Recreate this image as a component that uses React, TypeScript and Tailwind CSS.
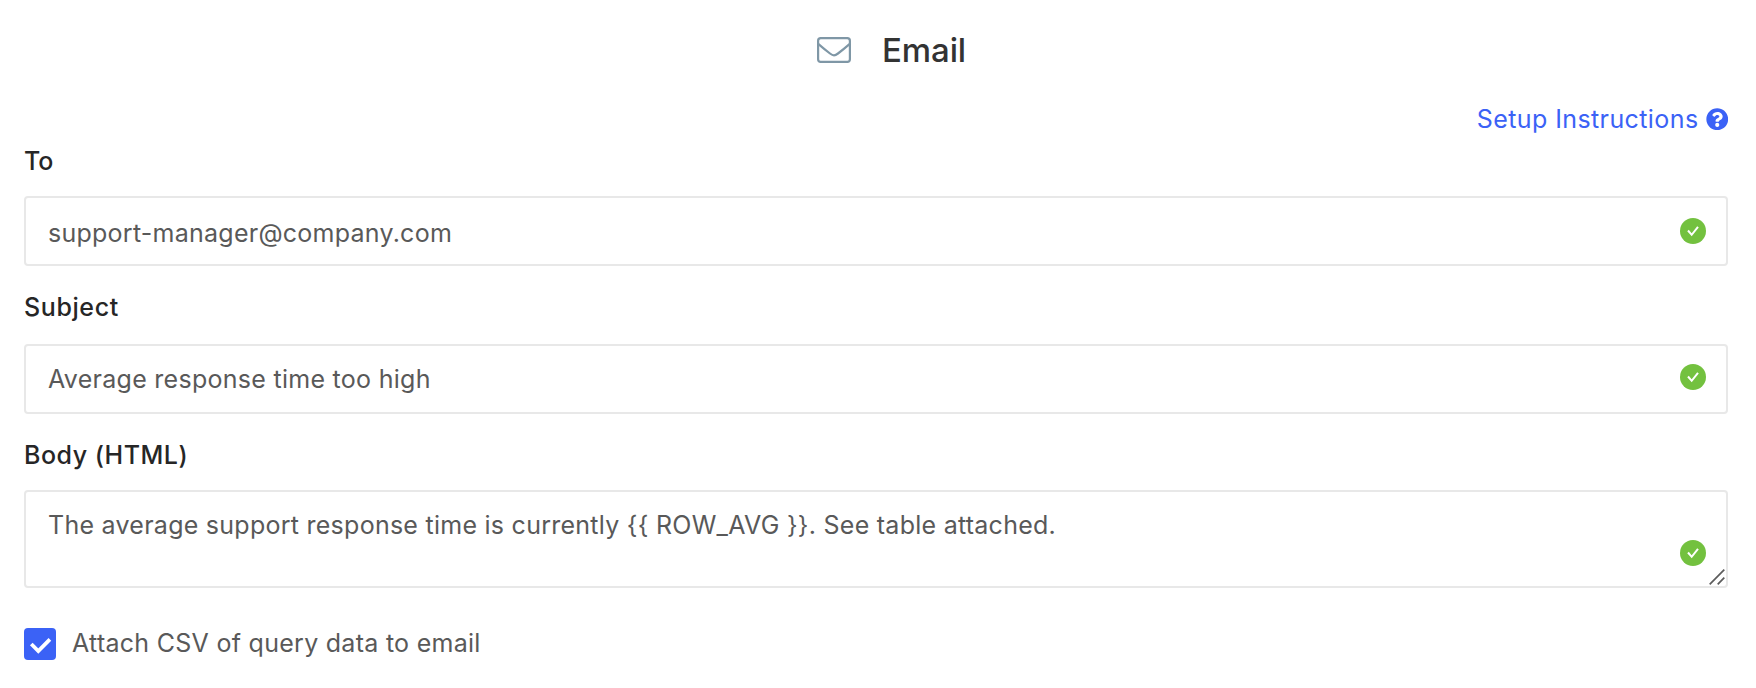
import { ReactNode } from 'react';
import { FaQuestionCircle } from 'react-icons/fa';

function EnvelopeIcon() {
  return (
    <svg className="-mt-px h-[26px] w-[34px]" viewBox="0 0 34 26" fill="none" stroke="#7f97a6" strokeWidth="2.2">
      <rect x="1.1" y="1.1" width="31.8" height="23.8" rx="2.6" />
      <path d="M1.2 6.9C5 10.2 10 14.2 13 16.5C14.6 17.7 15.6 18.3 17 18.3C18.4 18.3 19.4 17.7 21 16.5C24 14.2 29 10.2 32.8 6.9" />
    </svg>
  );
}

function ValidIcon() {
  return (
    <svg className="h-[26px] w-[26px] shrink-0" viewBox="0 0 26 26" fill="none">
      <circle cx="13" cy="13" r="13" fill="#73c13f" />
      <path d="M8 12.5L11.7 16.8L18 8.9" stroke="#fff" strokeWidth="2" />
    </svg>
  );
}

function Label({ children }: { children: ReactNode }) {
  return <div className="h-8 text-[25px] leading-8 font-medium text-[#262626]">{children}</div>;
}

export default function App() {
  return (
    <div className="flex h-[688px] flex-col bg-white pr-7 pl-6 font-['Inter',sans-serif] text-[25px] leading-8 tracking-[0.28px] text-[#595959]">
      <header className="mt-[30px] flex h-10 w-full shrink-0 items-center pl-[793px]">
        <EnvelopeIcon />
        <h1 className="ml-[31px] text-[33px] leading-10 font-medium tracking-[-0.1px] text-[#333333]">Email</h1>
      </header>

      <a className="mt-[33px] flex h-8 shrink-0 items-center justify-end tracking-[0.4px] text-[#3b62f6]">
        <span>Setup Instructions</span>
        <FaQuestionCircle className="ml-[7px] h-[22.5px] w-[22.5px]" />
      </a>

      <div className="mt-[10px]">
        <Label><span className="tracking-[-0.2px]">To</span></Label>
        <div className="mt-[19px] flex h-[70px] items-start justify-between rounded-[4px] border-2 border-[#e8e8e8] pt-[19px] pr-5 pl-[22px]">
          <span className="tracking-[0.25px]">support-manager@company.com</span>
          <span className="mt-px"><ValidIcon /></span>
        </div>
      </div>

      <div className="mt-[25px]">
        <Label><span className="tracking-[0.6px]">Subject</span></Label>
        <div className="mt-[21px] flex h-[70px] items-start justify-between rounded-[4px] border-2 border-[#e8e8e8] pt-[17px] pr-5 pl-[22px]">
          <span>Average response time too high</span>
          <span className="mt-px"><ValidIcon /></span>
        </div>
      </div>

      <div className="mt-[25px]">
        <Label><span className="tracking-[0.5px]">Body (HTML)</span></Label>
        <div className="relative mt-[19px] flex h-[98px] items-start justify-between rounded-[4px] border-2 border-[#e8e8e8] pt-[17px] pr-5 pl-[22px]">
          <span className="tracking-[0.26px]">{'The average support response time is currently {{ ROW_AVG }}. See table attached.'}</span>
          <span className="mt-[31px]"><ValidIcon /></span>
          <svg className="absolute right-[1px] bottom-[1px] h-4 w-4" viewBox="0 0 16 16" stroke="#5c5c5c" strokeWidth="1.7">
            <path d="M0.7 15.3L15.3 0.7M8.7 15.3L15.3 8.7" />
          </svg>
        </div>
      </div>

      <label className="mt-[39px] flex h-8 items-start">
        <span className="mt-px flex h-8 w-8 items-center justify-center rounded-[4px] bg-[#3b62f6]">
          <svg className="h-8 w-8" viewBox="0 0 32 32" fill="none" stroke="#fff" strokeWidth="3.8">
            <path d="M7.3 16L14.3 23L25.9 11.4" />
          </svg>
        </span>
        <span className="ml-4">Attach CSV of query data to email</span>
      </label>
    </div>
  );
}
